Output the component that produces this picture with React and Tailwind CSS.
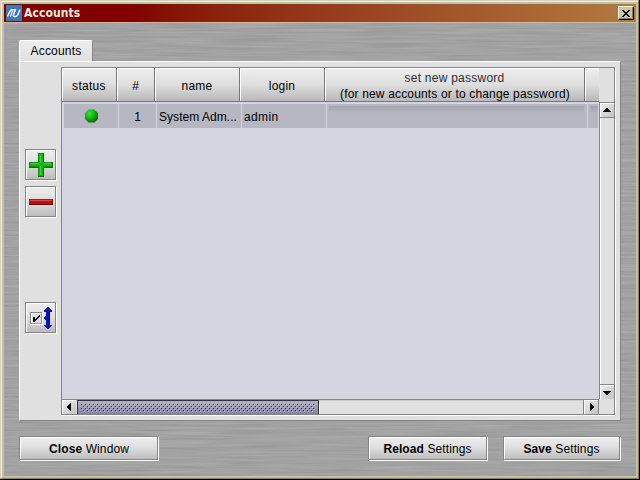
import React from "react";

const etched =
  "border border-[#858585] bg-linear-to-b from-[#ededed] via-[#dedede] to-[#bcbcbc] shadow-[inset_1px_1px_0_#fff,1px_1px_0_#fff]";

function BrushedMetal() {
  return (
    <svg className="absolute inset-0 h-full w-full" aria-hidden="true">
      <filter id="brushed" x="0" y="0" width="100%" height="100%" colorInterpolationFilters="sRGB">
        <feTurbulence type="fractalNoise" baseFrequency="0.014 0.45" numOctaves="3" seed="4" />
        <feColorMatrix values="0.11 0 0 0 0.58  0.11 0 0 0 0.58  0.11 0 0 0 0.58  0 0 0 0 1" />
      </filter>
      <rect width="100%" height="100%" filter="url(#brushed)" />
    </svg>
  );
}

function Logo() {
  return (
    <svg width="16" height="16" viewBox="0 0 16 16">
      <rect width="16" height="16" fill="#3c76bd" />
      <path d="M1.500 11.500L3.800 6.500Q4.500 5 6 4.800H9.300L7.500 9.500Q6.800 11.500 8.500 11.500H9.500Q11.200 11.500 12 9.500L14 4.500" fill="none" stroke="#f1f5fa" strokeWidth="1.500" />
      <path d="M4.300 11.800L6.600 5.500" stroke="#f1f5fa" strokeWidth="1.200" />
    </svg>
  );
}

function ToolButton({ label, children }) {
  return (
    <button aria-label={label} className={`flex h-[31px] w-[31px] items-center justify-center ${etched}`}>
      {children}
    </button>
  );
}

function PlusIcon() {
  return (
    <svg width="29" height="29" viewBox="0 0 29 29" shapeRendering="crispEdges">
      <path d="M12 3h6v9h9v6h-9v9h-6v-9H3v-6h9z" fill="#109410" />
      <path d="M13 4h4v9h9v3h-9v10h-4V16H4v-3h9z" fill="#18b418" />
      <path d="M14 5h1v8h-1zM5 13h8v1H5zM18 13h7v1h-7zM14 16h1v9h-1z" fill="#3ad83a" />
      <path d="M17 4h1v8h-1zM3 17h9v1H3zM18 17h9v1h-9zM17 18h1v9h-1zM12 26h6v1h-6zM26 12h1v6h-1z" fill="#087008" />
    </svg>
  );
}

function MinusIcon() {
  return (
    <svg width="29" height="29" viewBox="0 0 29 29" shapeRendering="crispEdges">
      <path d="M3 12h24v6H3z" fill="#b51212" />
      <path d="M4 13h22v1H4z" fill="#d94848" />
      <path d="M3 17h24v1H3zM26 12h1v6h-1z" fill="#740000" />
    </svg>
  );
}

function CheckRowIcon() {
  return (
    <svg width="29" height="29" viewBox="0 0 29 29" shapeRendering="crispEdges">
      <path d="M4 9h12v12H4z" fill="#858585" />
      <path d="M5 10h11v11H5z" fill="#fff" />
      <path d="M6 11h9v9H6z" fill="#dedede" />
      <path d="M15 10h1v11H5v-1h10z" fill="#9b9b9b" />
      <path d="M16 9h1v13H4v-1h12z" fill="#fff" />
      <path d="M7 14h2v2h1v-1h1v-1h1v-1h1v-1h1v2h-1v1h-1v1h-1v1h-1v1H9v1H7z" fill="#000" />
      <path d="M21 4h2v1h1v1h1v1h1v2h-2v13h2v1h-1v1h-1v1h-1v1h-2v-1h-1v-1h-1v-1h-1v-1h2v-5h-1v-1h-1v-2h1v-1h1V9h-2V7h1V6h1V5h1z" fill="#1414b4" />
      <path d="M23 9h1v13h-1zM25 7h1v2h-1z" fill="#05056f" />
    </svg>
  );
}

function ArrowButton({ dir }) {
  const paths = {
    up: "M6 5h2v1h1v1h1v1h1v1H3V8h1V7h1V6h1z",
    down: "M3 6h8v1h-1v1H9v1H8v1H6V9H5V8H4V7H3z",
    left: "M8 3h1v8H8v-1H7V9H6V8H5V6h1V5h1V4h1z",
    right: "M6 3h1v1h1v1h1v1h1v2H9v1H8v1H7v1H6z",
  };
  return (
    <svg width="14" height="14" viewBox="0 0 14 14" shapeRendering="crispEdges" className="shrink-0 bg-linear-to-br from-[#eeeeee] to-[#c3c3c3] shadow-[inset_1px_1px_0_#fff]">
      <path d={paths[dir]} fill="#000" />
    </svg>
  );
}

function Head({ w, children }) {
  return (
    <div className={`${w} flex h-[34px] shrink-0 flex-col items-center justify-center overflow-hidden border-r border-b border-[#777777] bg-linear-to-b from-[#eeeeee] via-[#dedede] to-[#b9b9b9] pt-[2px] leading-4 whitespace-nowrap shadow-[inset_1px_1px_0_#fff]`}>
      {children}
    </div>
  );
}

const cell = "flex h-6 shrink-0 items-center overflow-hidden whitespace-nowrap bg-[#b7b7c3]";

function PasswordWell() {
  return <div className="mt-[2px] ml-[2px] h-[7px] flex-1 self-start bg-linear-to-b from-[#a3a3ae] to-[#b7b7c3]" />;
}

function Table() {
  return (
    <div className="mt-[5px] ml-[4px] flex h-[348px] w-[554px] shrink-0 flex-col border border-[#858585] bg-[#e0e0e0] shadow-[1px_1px_0_#fff]">
      <div className="flex h-[331px]">
        <div className="flex w-[537px] flex-col overflow-hidden bg-[#d5d5e2]">
          <div className="flex">
            <Head w="w-[55px]"><span className="tracking-[0.3px]">status</span></Head>
            <Head w="w-[38px]">#</Head>
            <Head w="w-[85px]"><span className="tracking-[0.2px]">name</span></Head>
            <Head w="w-[85px]"><span className="tracking-[0.2px]">login</span></Head>
            <Head w="w-[260px]">
              <span className="tracking-[0.25px] text-[#303030]">set new password</span>
              <span className="ml-px tracking-[0.16px]">(for new accounts or to change password)</span>
            </Head>
            <Head w="w-[20px]" />
          </div>
          <div className="mt-[2px] ml-[2px] flex gap-px">
            <div className={`w-[54px] justify-center ${cell}`}>
              <svg width="14" height="14" viewBox="0 0 14 14">
                <defs><radialGradient id="led" cx=".35" cy=".3" r=".75"><stop stopColor="#35e635" /><stop offset=".5" stopColor="#12b512" /><stop offset="1" stopColor="#046a04" /></radialGradient></defs>
                <path d="M4.500 .5h5.500L14 4v6L10.500 13.500H4.500L1 10V4z" fill="url(#led)" />
              </svg>
            </div>
            <div className={`w-[37px] justify-center pt-px ${cell}`}>1</div>
            <div className={`w-[84px] pt-px pl-[2px] tracking-[0.05px] ${cell}`}>System Adm...</div>
            <div className={`w-[84px] pt-px pl-[2px] tracking-[0.35px] ${cell}`}>admin</div>
            <div className={`w-[260px] pr-[3px] ${cell}`}><PasswordWell /></div>
            <div className={`w-[10px] ${cell}`}><PasswordWell /></div>
          </div>
        </div>
        <div className="flex w-[15px] flex-col">
          <div className="h-[34px]" />
          <div className="flex h-[297px] flex-col justify-between border-t border-l border-[#858585]">
            <div className="h-[15px] border-b border-[#858585]"><ArrowButton dir="up" /></div>
            <div className="w-px flex-1 bg-white" />
            <div className="h-[15px] border-t border-[#858585]"><ArrowButton dir="down" /></div>
          </div>
        </div>
      </div>
      <div className="flex h-[15px]">
        <div className="flex w-[536px] border-t border-[#858585]">
          <ArrowButton dir="left" />
          <svg width="243" height="14" shapeRendering="crispEdges" className="ml-px shrink-0">
            <defs>
              <pattern id="bumps" width="4" height="4" x="3" y="3" patternUnits="userSpaceOnUse">
                <path d="M0 0h1v1H0zM2 2h1v1H2z" fill="#c3c3d6" />
                <path d="M1 1h1v1H1zM3 3h1v1H3z" fill="#34344a" />
              </pattern>
              <linearGradient id="thumb" x2="0" y2="1"><stop stopColor="#b4b4c8" /><stop offset="1" stopColor="#8282a0" /></linearGradient>
            </defs>
            <path d="M0 0h242v14H0z" fill="url(#thumb)" />
            <path d="M4 3h234v9H4z" fill="url(#bumps)" />
            <path d="M.5 14V.5h241V14" fill="none" stroke="#33333f" />
            <path d="M242.500 1v13" stroke="#fff" />
          </svg>
          <div className="flex-1 border-r border-[#858585] bg-[#e0e0e0] shadow-[inset_0_1px_0_#cfcfcf]" />
          <ArrowButton dir="right" />
        </div>
        <div className="w-px bg-[#858585]" />
      </div>
    </div>
  );
}

function ActionButton({ strong, rest, w }) {
  return (
    <button className={`${w} h-[24px] pt-px text-center leading-[22px] tracking-[0.1px] ${etched}`}>
      <b>{strong}</b> {rest}
    </button>
  );
}

export default function App() {
  return (
    <div className="h-[480px] w-[640px] overflow-hidden border-r border-b border-black bg-[#c3bfa0] font-['Liberation_Sans',Arial,sans-serif] text-[12px] text-black">
      <div className="h-full border-t border-l border-[#d5d1b5] border-r border-b border-r-[#857f56] border-b-[#857f56] pt-px pl-px shadow-[inset_1px_1px_0_#f2efdd]">
        <div className="flex h-full flex-col pt-[2px] pr-[2px] pb-[2px] pl-[2px]">
          <div className="flex h-[18px] shrink-0 items-center bg-linear-to-r from-[#800000] from-20% to-[#b37a42] pr-[2px] pl-[2px]">
            <Logo />
            <span className="ml-[2px] flex-1 font-['DejaVu_Sans_Condensed','DejaVu_Sans',sans-serif] text-[12px] leading-4 font-bold tracking-[0.1px] text-[#eeeadb]">Accounts</span>
            <button aria-label="Close" className="flex h-[14px] w-4 items-center justify-center border border-t-[#f5f2e0] border-r-black border-b-black border-l-[#f5f2e0] bg-[#c9c5a5] shadow-[inset_-1px_-1px_0_#857f56]">
              <svg width="8" height="7" shapeRendering="crispEdges"><path d="M0 0h2v1h1v1h2V1h1V0h2v1H7v1H6v1H5v1h1v1h1v1h1v1H6V6H5V5H3v1H2v1H0V6h1V5h1V4h1V3H2V2H1V1H0z" /></svg>
            </button>
          </div>
          <div className="relative isolate mt-px flex-1 overflow-hidden">
            <div className="absolute inset-0 -z-10"><BrushedMetal /></div>
            <div className="flex h-full flex-col pt-[17px] pr-[15px] pl-[15px]">
              <div className="h-[21px] w-[74px] rounded-t-[2px] border-t border-r border-l border-t-white border-r-[#858585] border-l-white bg-linear-to-b from-[#ededed] to-[#e0e0e0] text-center leading-[20px] tracking-[0.2px]">Accounts</div>
              <div className="flex h-[360px] w-[602px] shrink-0 border border-t-white border-r-[#858585] border-b-[#858585] border-l-white bg-[#e0e0e0]">
                <div className="ml-[5px] flex w-8 shrink-0 flex-col pt-[87px]">
                  <ToolButton label="Add account"><PlusIcon /></ToolButton>
                  <div className="mt-[6px]"><ToolButton label="Remove account"><MinusIcon /></ToolButton></div>
                  <div className="mt-[85px]"><ToolButton label="Toggle rows"><CheckRowIcon /></ToolButton></div>
                </div>
                <Table />
              </div>
              <div className="mt-[15px] flex pr-px">
                <ActionButton w="w-[139px] pl-px" strong="Close" rest="Window" />
                <div className="flex-1" />
                <ActionButton w="w-[119px]" strong="Reload" rest="Settings" />
                <ActionButton w="ml-[16px] w-[117px]" strong="Save" rest="Settings" />
              </div>
            </div>
          </div>
        </div>
      </div>
    </div>
  );
}
